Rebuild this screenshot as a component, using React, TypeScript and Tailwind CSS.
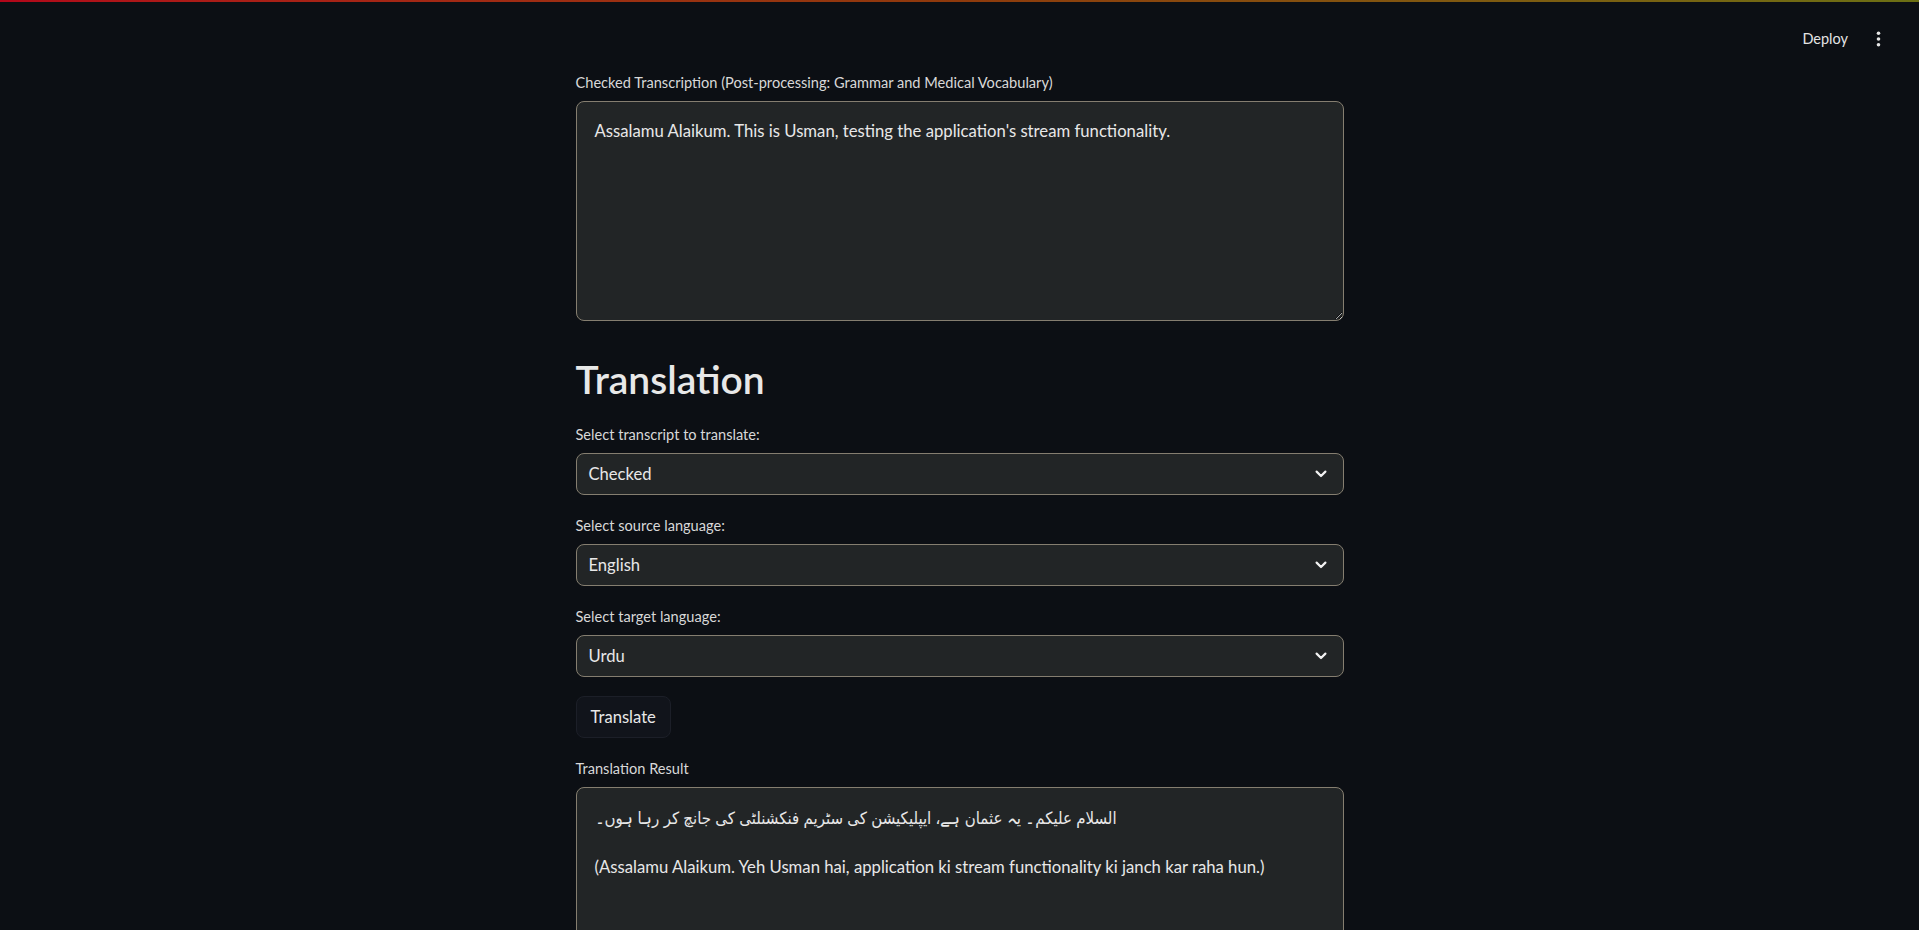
import React from "react";

function Chevron() {
  return (
    <svg width="12" height="8" viewBox="0 0 12 8" fill="none" aria-hidden="true">
      <polyline
        points="1.6,1.6 6,6 10.4,1.6"
        stroke="#f2f2f2"
        strokeWidth="2.2"
        strokeLinecap="round"
        strokeLinejoin="round"
      />
    </svg>
  );
}

function Kebab() {
  return (
    <svg width="5" height="16" viewBox="0 0 5 16" aria-hidden="true">
      <circle cx="2.5" cy="2.2" r="1.8" fill="#e6e6e6" />
      <circle cx="2.5" cy="8" r="1.8" fill="#e6e6e6" />
      <circle cx="2.5" cy="13.8" r="1.8" fill="#e6e6e6" />
    </svg>
  );
}

function Label({ children }: { children: React.ReactNode }) {
  return (
    <div className="h-[24px] leading-[24px] text-[14.6px] text-[#d8d8d8] mb-[6px] whitespace-nowrap">
      {children}
    </div>
  );
}

function SelectBox({ label, value }: { label: string; value: string }) {
  return (
    <div className="flex flex-col">
      <Label>{label}</Label>
      <div className="h-[42px] w-full rounded-lg border border-[#857e70] bg-[#222526] flex items-center justify-between pl-[12px] pr-[16px]">
        <span className="text-[16.6px] text-[#e8e8e8]">{value}</span>
        <Chevron />
      </div>
    </div>
  );
}

const urdu =
  "السلام علیکم۔ یہ عثمان ہے، ایپلیکیشن کی سٹریم فنکشنلٹی کی جانچ کر رہا ہوں۔";

export default function App() {
  return (
    <div className="relative h-screen overflow-hidden bg-[#0c0f14] text-[#ececec] font-['Lato','DejaVu_Sans_Condensed','DejaVu_Sans',sans-serif]">
      <div className="h-[2px] w-full bg-linear-to-r from-[#b3061a] via-[#8f3a0c] to-[#6c7014]" />

      <div className="absolute top-[2px] right-0 h-[74px] flex items-center pr-[38px]">
        <span className="text-[14.5px] text-[#e4e4e4]">Deploy</span>
        <span className="ml-[28px] flex items-center">
          <Kebab />
        </span>
      </div>

      <main className="mx-auto w-[768px] pt-[69px] flex flex-col">
        <div className="flex flex-col">
          <Label>Checked Transcription (Post-processing: Grammar and Medical Vocabulary)</Label>
          <textarea
            readOnly
            defaultValue={"Assalamu Alaikum. This is Usman, testing the application's stream functionality."}
            className="h-[220px] w-full rounded-lg border border-[#857e70] bg-[#222526] text-[16.7px] leading-[24px] text-[#e8e8e8] pt-[17px] pl-[18px] pr-[18px] resize-y outline-none [color-scheme:dark]"
          />
        </div>

        <h2 className="mt-[36px] mb-[22px] h-[44px] leading-[44px] text-[39px] font-semibold text-[#e8e8e8]">
          Translation
        </h2>

        <div className="flex flex-col gap-[19px]">
          <SelectBox label="Select transcript to translate:" value="Checked" />
          <SelectBox label="Select source language:" value="English" />
          <SelectBox label="Select target language:" value="Urdu" />

          <div>
            <button className="h-[42px] px-[14px] rounded-lg border border-[#1c1f28] bg-[#11141b] text-[16.6px] text-[#e8e8e8]">
              Translate
            </button>
          </div>

          <div className="flex flex-col">
            <Label>Translation Result</Label>
            <textarea
              readOnly
              defaultValue={urdu + "\n\n(Assalamu Alaikum. Yeh Usman hai, application ki stream functionality ki janch kar raha hun.)"}
              className="h-[220px] w-full rounded-lg border border-[#857e70] bg-[#222526] text-[16.7px] leading-[24.5px] text-[#e8e8e8] pt-[18px] pl-[18px] pr-[18px] resize-y outline-none [color-scheme:dark]"
            />
          </div>
        </div>
      </main>
    </div>
  );
}
